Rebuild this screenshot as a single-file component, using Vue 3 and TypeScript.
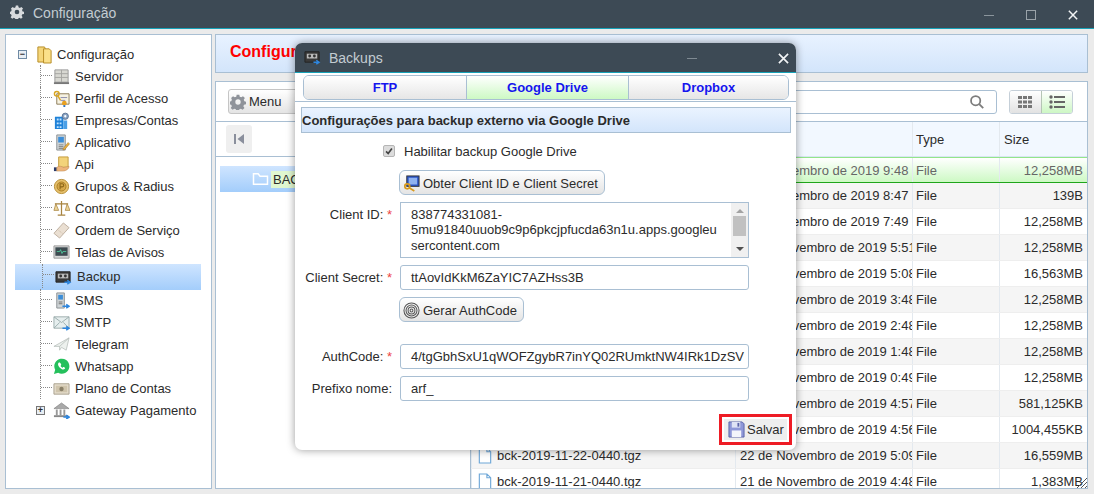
<template>
  <div class="app-window">
    <!-- Title bar -->
    <header class="title-bar">
      <svg class="title-gear" viewBox="0 0 24 24" v-html="gearIcon"></svg>
      <span class="title-text">Configuração</span>
      <div class="window-controls">
        <span class="ctl-min"></span>
        <span class="ctl-max"></span>
        <svg class="ctl-close" viewBox="0 0 12 12"><path d="M1 1 11 11M11 1 1 11" /></svg>
      </div>
    </header>

    <div class="workspace">
      <!-- Tree -->
      <aside class="tree-panel">
        <div class="tree-root">
          <span class="expander">−</span>
          <svg class="tree-icon folder-icon" viewBox="0 0 18 20">
            <path d="M2 2h7l1 2v14H2z" fill="#f5d67a" stroke="#b58a23" />
            <path d="M8 4h6l2 2v13H8z" fill="#fbe08a" stroke="#b58a23" />
          </svg>
          <span>Configuração</span>
        </div>
        <div class="tree-children">
          <div
            v-for="item in treeItems"
            :key="item.label"
            class="tree-row"
            :class="{ selected: item.selected }"
          >
            <span class="dots"></span>
            <svg class="tree-icon" viewBox="0 0 18 18" v-html="icons[item.icon]"></svg>
            <span>{{ item.label }}</span>
          </div>
        </div>
        <div class="tree-last">
          <span class="expander plus">+</span>
          <svg class="tree-icon" viewBox="0 0 18 18" v-html="icons.bank"></svg>
          <span>Gateway Pagamento</span>
        </div>
      </aside>

      <div class="main-col">
        <div class="page-header">Configurações de Backup</div>

        <section class="files-panel">
          <div class="toolbar">
            <button class="menu-btn">
              <svg class="menu-gear" viewBox="0 0 24 24" v-html="gearIcon"></svg>
              Menu
            </button>
            <div class="search-box">
              <svg class="search-icon" viewBox="0 0 18 18"><circle cx="7.5" cy="7.5" r="5.2" /><path d="M11.5 11.5 16 16" /></svg>
            </div>
            <div class="view-toggle">
              <span class="view-btn">
                <svg viewBox="0 0 16 14"><path d="M1 1h4v3H1zM6 1h4v3H6zM11 1h4v3h-4zM1 5.5h4v3H1zM6 5.5h4v3H6zM11 5.5h4v3h-4zM1 10h4v3H1zM6 10h4v3H6zM11 10h4v3h-4z" fill="#777" /></svg>
              </span>
              <span class="view-btn active">
                <svg viewBox="0 0 16 14"><circle cx="2" cy="2" r="1.7" fill="#666" /><circle cx="2" cy="7" r="1.7" fill="#666" /><circle cx="2" cy="12" r="1.7" fill="#666" /><path d="M5 2h11M5 7h11M5 12h11" stroke="#666" stroke-width="1.8" /></svg>
              </span>
            </div>
          </div>

          <div class="split">
            <div class="folders">
              <div class="folders-head">
                <span class="collapse-btn">
                  <svg viewBox="0 0 12 12"><path d="M1 1h2v10H1z" fill="#8a8f9c" /><path d="M11 1v10L4.500 6z" fill="#8a8f9c" /></svg>
                </span>
              </div>
              <div class="folder-row">
                <svg class="folder-white" viewBox="0 0 18 15"><path d="M1.500 13V2h5l2 2.500h8V13z" /></svg>
                <span class="folder-name">BACKUP</span>
              </div>
            </div>

            <div class="file-table">
              <div class="table-row table-head">
                <span class="cell">Name</span>
                <span class="cell">Date</span>
                <span class="cell type-cell">Type</span>
                <span class="cell">Size</span>
              </div>
              <div
                v-for="(file, index) in files"
                :key="file.name"
                class="table-row"
                :class="{ current: index === 0, odd: index % 2 === 1 }"
              >
                <span class="cell name-cell">
                  <svg class="file-icon" viewBox="0 0 14 18"><path d="M1 1h8l4 4v12H1zM9 1v4h4" /></svg>
                  {{ file.name }}
                </span>
                <span class="cell date-cell">{{ file.date }}</span>
                <span class="cell type-cell">File</span>
                <span class="cell size-cell">{{ file.size }}</span>
              </div>
            </div>
          </div>
          <svg class="grip" viewBox="0 0 12 12"><path d="M1 11 11 1M5 11 11 5M9 11 11 9" /></svg>
        </section>
      </div>
    </div>

    <!-- Backups dialog -->
    <div class="dialog">
      <div class="dialog-title">
        <svg class="dialog-icon" viewBox="0 0 18 18" v-html="icons.tape"></svg>
        <span class="dialog-name">Backups</span>
        <span class="dialog-min"></span>
        <svg class="dialog-close" viewBox="0 0 12 12"><path d="M1 1 11 11M11 1 1 11" /></svg>
      </div>

      <div class="tabs-wrap">
        <div class="tabs">
          <span
            v-for="tab in tabs"
            :key="tab"
            class="tab"
            :class="{ active: tab === 'Google Drive' }"
          >{{ tab }}</span>
        </div>
      </div>

      <div class="section-title">Configurações para backup externo via Google Drive</div>

      <div class="form">
        <div class="check-row">
          <span class="checkbox">
            <svg viewBox="0 0 12 12"><path d="M2.500 6.500 5 9l4.500-6" /></svg>
          </span>
          <span>Habilitar backup Google Drive</span>
        </div>

        <div class="field-row">
          <span></span>
          <button class="form-btn">
            <svg class="btn-icon" viewBox="0 0 18 18">
              <rect x="4" y="1" width="13" height="11" fill="#2a55c8" stroke="#333" />
              <path d="M6 3h9v7H6z" fill="#8fb2f0" />
              <circle cx="4.500" cy="12" r="2.600" fill="none" stroke="#d89a1e" stroke-width="1.800" />
              <path d="M6.500 13.500 12 17" stroke="#d89a1e" stroke-width="1.800" />
            </svg>
            Obter Client ID e Client Secret
          </button>
        </div>

        <div class="field-row tall">
          <label>Client ID: <em>*</em></label>
          <div class="textarea">
            <div class="textarea-text">838774331081-<br />5mu91840uuob9c9p6pkcjpfucda63n1u.apps.googleu<br />sercontent.com</div>
            <div class="scrollbar">
              <span class="arrow up"></span>
              <span class="thumb"></span>
              <span class="arrow down"></span>
            </div>
          </div>
        </div>

        <div class="field-row">
          <label>Client Secret: <em>*</em></label>
          <div class="input">ttAovIdKkM6ZaYIC7AZHss3B</div>
        </div>

        <div class="field-row">
          <span></span>
          <button class="form-btn">
            <svg class="btn-icon" viewBox="0 0 18 18">
              <g fill="none" stroke="#555" stroke-width="1.100">
                <circle cx="9" cy="9" r="8" /><circle cx="9" cy="9" r="5.800" /><circle cx="9" cy="9" r="3.600" /><circle cx="9" cy="9" r="1.500" />
              </g>
            </svg>
            Gerar AuthCode
          </button>
        </div>

        <div class="field-row spaced">
          <label>AuthCode: <em>*</em></label>
          <div class="input">4/tgGbhSxU1qWOFZgybR7inYQ02RUmktNW4IRk1DzSV</div>
        </div>

        <div class="field-row">
          <label>Prefixo nome:</label>
          <div class="input">arf_</div>
        </div>
      </div>

      <div class="dialog-foot">
        <div class="highlight">
          <button class="save-btn">
            <svg class="btn-icon" viewBox="0 0 18 18">
              <path d="M1 1h14l2 2v14H1z" fill="#8e97d8" stroke="#5a63a8" />
              <path d="M4 1h9v6H4z" fill="#dfe3f5" />
              <path d="M10 2h2v4h-2z" fill="#5a63a8" />
              <path d="M4 10h10v7H4z" fill="#f4f5fb" />
            </svg>
            Salvar
          </button>
        </div>
      </div>
    </div>
  </div>
</template>

<script setup lang="ts">
interface TreeItem {
  label: string;
  icon: string;
  selected?: boolean;
}

interface FileRow {
  name: string;
  date: string;
  size: string;
}

const gearIcon =
  '<path fill="currentColor" fill-rule="evenodd" d="M10 1h4l.6 3 2.300 1 2.600-1.700 2.800 2.800L20.600 8.700l1 2.300 2.400.6v3.800l-3 .6-1 2.300 1.700 2.600-2.800 2.800-2.600-1.700-2.300 1-.6 3h-4l-.6-3-2.300-1-2.600 1.700-2.800-2.800 1.700-2.600-1-2.300-3-.6v-3.800l3-.6 1-2.300L1.700 6.100l2.800-2.800L7.100 5l2.300-1zM12 8a4 4 0 1 0 0 8 4 4 0 0 0 0-8z"/>';

const icons: Record<string, string> = {
  server:
    '<path d="M2 2h14v13H2z" fill="#d8d8d2" stroke="#999"/><path d="M9 2v13M2 6h14M2 10h14" stroke="#a5a5a0"/><path d="M1 15h16v2H1z" fill="#777"/>',
  cert:
    '<path d="M4 4h13v11H4z" fill="#f6f2e2" stroke="#8a7a55"/><path d="M8 8h7M8 11h5" stroke="#88a"/><circle cx="4" cy="4" r="2.500" fill="none" stroke="#d8a520" stroke-width="1.500"/><path d="M5 6l3 5" stroke="#d8a520" stroke-width="1.500"/><circle cx="12" cy="14" r="2.500" fill="#e8a020"/><path d="M11 16h2v2h-2z" fill="#2a70c8"/>',
  company:
    '<path d="M2 5h9v13H2z" fill="#1f82d8"/><path d="M4 7h2v2H4zM7 7h2v2H7zM4 11h2v2H4zM7 11h2v2H7zM4 15h2v2H4zM7 15h2v2H7z" fill="#bfe2ff"/><path d="M11 9h4v9h-4z" fill="#4ca0e6"/><circle cx="13" cy="4.500" r="3.300" fill="#8aa4c4" stroke="#5a7292"/><circle cx="13" cy="4.500" r="1.200" fill="#fff"/>',
  app:
    '<path d="M4 1h9v16H4z" fill="#cfd4d6" stroke="#8a9094"/><path d="M5.500 3h6v6h-6z" fill="#3d8ed8"/><path d="M6 11h5v1H6zM6 13h5v1H6zM6 15h5v1H6z" fill="#777"/><path d="M11 15l5-6 1.500 1.500-5 6-2 .5z" fill="#e8b040" stroke="#a06a20" stroke-width=".5"/>',
  api:
    '<path d="M6 1h10v11H6z" fill="#f3d37a" stroke="#c49a3a"/><path d="M1 12h3v4H1z" fill="#2a3a68"/><path d="M4 12c3-2 5-1 7 0l6-1c0 3-4 5-7 5H4z" fill="#eeb57c" stroke="#b98550" stroke-width=".5"/>',
  coin:
    '<circle cx="9" cy="9" r="7.500" fill="#e8c26e" stroke="#b58a30"/><circle cx="9" cy="9" r="4.800" fill="#d6a84a" stroke="#a87c24"/><path d="M7.500 12V6h2.200a1.700 1.700 0 0 1 0 3.400H7.500" fill="none" stroke="#8a6418" stroke-width="1.100"/>',
  scale:
    '<path d="M9 1v15M5 16h8M2 4h14" stroke="#a88440" stroke-width="1.300" fill="none"/><path d="M3 4 1 11h5zM15 4l-2 7h5z" fill="#eed69a" stroke="#a88440" stroke-width=".8"/>',
  ticket:
    '<path d="M1 12 11 1l6 5L7 17z" fill="#eadfd2" stroke="#bdae9e"/><path d="M6 9l4 3" stroke="#c9b8a4" stroke-dasharray="1 1"/>',
  monitor:
    '<path d="M1 2h16v13H1z" fill="#d5d6d6" stroke="#999"/><path d="M2.500 3.500h13v9h-13z" fill="#3d4a50"/><path d="M4 8h3l1-2 1.500 4 1-2H14" fill="none" stroke="#52d0a0" stroke-width=".9"/>',
  tape:
    '<path d="M1 4h15v11H1z" fill="#3a3a3a" stroke="#222"/><path d="M3 6h11v5H3z" fill="#bbb"/><circle cx="6" cy="8.500" r="1.500" fill="#333"/><circle cx="11" cy="8.500" r="1.500" fill="#333"/><path d="M10 15h5M13 13l3 2-3 2" fill="none" stroke="#2e86de" stroke-width="1.500"/>',
  sms:
    '<path d="M4 1h8v16H4z" fill="#cfd4d6" stroke="#8a9094"/><path d="M5.500 3h5v5h-5z" fill="#3d8ed8"/><path d="M6 10h4v1H6zM6 12h4v1H6z" fill="#777"/><path d="M10 15h6M14 13l3 2-3 2" fill="none" stroke="#2e86de" stroke-width="1.600"/>',
  mail:
    '<path d="M1 3h16v12H1z" fill="#e6eeee" stroke="#9aacac"/><path d="M1 3l8 6 8-6M1 15l6-6M17 15l-6-6" fill="none" stroke="#9aacac"/><path d="M10 15h6M14 13l3 2-3 2" fill="none" stroke="#2e86de" stroke-width="1.600"/>',
  plane:
    '<path d="M1 11 17 2l-3 13-5-3-2 3v-4z" fill="#edf1ee" stroke="#b5bdb8" stroke-width=".8"/><path d="M7 11 17 2" stroke="#b5bdb8" stroke-width=".8"/>',
  whatsapp:
    '<path d="M1 17l1.300-4.500A8 8 0 1 1 5.500 15.700z" fill="#25c05c"/><path d="M6 5c-1 1-1 3 1 5s4 2.800 5.500 1.500c.6-.6.300-1-.3-1.400-1-.6-1.300-.6-1.700 0-.3.400-.7.300-1.600-.5S7.800 8.400 8.300 8c.6-.5.500-.8 0-1.800C7.800 5 7 4.300 6 5z" fill="#fff"/>',
  money:
    '<path d="M1 4h16v11H1z" fill="#e4dccb" stroke="#a89f8c"/><path d="M3 6h12v7H3z" fill="#cfc4ac"/><circle cx="9" cy="9.500" r="2.300" fill="#8a8068"/>',
  bank:
    '<path d="M1 7 9 1l8 6z" fill="#a9a9a9" stroke="#777" stroke-width=".6"/><path d="M3 8h2v6H3zM7 8h2v6H7zM11 8h2v6h-2z" fill="#999"/><path d="M1 14h15v2H1z" fill="#888"/><path d="M11 16h5M14 14l3 2-3 2" fill="none" stroke="#2e86de" stroke-width="1.600"/>'
};

const treeItems: TreeItem[] = [
  { label: 'Servidor', icon: 'server' },
  { label: 'Perfil de Acesso', icon: 'cert' },
  { label: 'Empresas/Contas', icon: 'company' },
  { label: 'Aplicativo', icon: 'app' },
  { label: 'Api', icon: 'api' },
  { label: 'Grupos & Radius', icon: 'coin' },
  { label: 'Contratos', icon: 'scale' },
  { label: 'Ordem de Serviço', icon: 'ticket' },
  { label: 'Telas de Avisos', icon: 'monitor' },
  { label: 'Backup', icon: 'tape', selected: true },
  { label: 'SMS', icon: 'sms' },
  { label: 'SMTP', icon: 'mail' },
  { label: 'Telegram', icon: 'plane' },
  { label: 'Whatsapp', icon: 'whatsapp' },
  { label: 'Plano de Contas', icon: 'money' }
];

const tabs = ['FTP', 'Google Drive', 'Dropbox'];

const files: FileRow[] = [
  { name: 'bck-2019-12-03-0440.tgz', date: '3 de Novembro de 2019 9:48', size: '12,258MB' },
  { name: 'bck-2019-12-02-0440.tgz', date: '2 de Novembro de 2019 8:47', size: '139B' },
  { name: 'bck-2019-12-01-0440.tgz', date: '1 de Novembro de 2019 7:49', size: '12,258MB' },
  { name: 'bck-2019-11-30-0440.tgz', date: '30 de Novembro de 2019 5:51', size: '12,258MB' },
  { name: 'bck-2019-11-29-0440.tgz', date: '29 de Novembro de 2019 5:08', size: '16,563MB' },
  { name: 'bck-2019-11-28-0440.tgz', date: '28 de Novembro de 2019 3:48', size: '12,258MB' },
  { name: 'bck-2019-11-27-0440.tgz', date: '27 de Novembro de 2019 2:48', size: '12,258MB' },
  { name: 'bck-2019-11-26-0440.tgz', date: '26 de Novembro de 2019 1:48', size: '12,258MB' },
  { name: 'bck-2019-11-25-0440.tgz', date: '25 de Novembro de 2019 0:49', size: '12,258MB' },
  { name: 'bck-2019-11-24-0440.tgz', date: '24 de Novembro de 2019 4:57', size: '581,125KB' },
  { name: 'bck-2019-11-23-0440.tgz', date: '23 de Novembro de 2019 4:56', size: '1004,455KB' },
  { name: 'bck-2019-11-22-0440.tgz', date: '22 de Novembro de 2019 5:09', size: '16,559MB' },
  { name: 'bck-2019-11-21-0440.tgz', date: '21 de Novembro de 2019 4:48', size: '1,383MB' }
];
</script>

<style>
html,
body {
  margin: 0;
  overflow: hidden;
  background: #ebebeb;
}
</style>

<style scoped>
* {
  box-sizing: border-box;
}

.app-window {
  position: relative;
  width: 1094px;
  height: 494px;
  display: flex;
  flex-direction: column;
  overflow: hidden;
  background: #ebebeb;
  font-family: "Liberation Sans", Arial, sans-serif;
  font-size: 13px;
  color: #2b2b2b;
}

/* Title bar */
.title-bar {
  height: 29px;
  flex-shrink: 0;
  display: flex;
  align-items: center;
  padding: 0 16px 2px 10px;
  background: #3d4a55;
  border-bottom: 1px solid #17a2b8;
  color: #c3ccd2;
}

.title-gear {
  width: 14px;
  height: 14px;
  margin-top: -3px;
  color: #d7dadd;
}

.title-text {
  margin-left: 9px;
  font-size: 14px;
}

.window-controls {
  margin-left: auto;
  margin-top: 4px;
  display: flex;
  align-items: center;
  gap: 32px;
}

.ctl-min {
  width: 10px;
  height: 1px;
  background: #8b959c;
}

.ctl-max {
  width: 10px;
  height: 10px;
  border: 1px solid #9aa3a9;
}

.ctl-close {
  width: 10px;
  height: 10px;
  fill: none;
  stroke: #f2f4f5;
  stroke-width: 1.800;
}

.workspace {
  flex: 1;
  min-height: 0;
  display: flex;
  gap: 3px;
  padding: 5px 6px 5px 5px;
}

/* Tree */
.tree-panel {
  width: 207px;
  flex-shrink: 0;
  padding: 8px 10px 0 9px;
  background: #fff;
  border: 1px solid #a9bfd3;
}

.tree-root,
.tree-last {
  height: 22px;
  display: flex;
  align-items: center;
}

.tree-root span:last-child,
.tree-last span:last-child,
.tree-row span:last-child {
  white-space: nowrap;
}

.expander {
  width: 9px;
  height: 9px;
  margin-left: 3px;
  display: flex;
  align-items: center;
  justify-content: center;
  border: 1px solid #6f8aa5;
  background: #e8eef4;
  font-size: 9px;
  line-height: 1;
  font-weight: 700;
}

.expander.plus {
  margin-left: 21px;
  margin-right: 8px;
  border-color: #777;
}

.tree-icon {
  width: 17px;
  height: 17px;
  margin-right: 5px;
  flex-shrink: 0;
}

.folder-icon {
  width: 17px;
  height: 19px;
  margin-left: 9px;
  margin-right: 4px;
}

.tree-children {
  display: flex;
  flex-direction: column;
}

.tree-row {
  height: 22px;
  display: flex;
  align-items: center;
  padding-left: 25px;
}

.tree-row .dots {
  width: 12px;
  height: 22px;
  margin-right: 1px;
  border-left: 1px dotted #888;
  background: linear-gradient(to right, #888 50%, transparent 50%) 0 10px / 2px 1px repeat-x;
  flex-shrink: 0;
}

.tree-row.selected {
  height: 26px;
  margin: 1px 0 -1px;
  padding-left: 27px;
  padding-bottom: 2px;
  background: linear-gradient(#cfe5ff, #a3cdfb);
}

.tree-row.selected .dots {
  height: 24px;
  background-position: 0 10px;
}

/* Main column */
.main-col {
  flex: 1;
  min-width: 0;
  display: flex;
  flex-direction: column;
  gap: 8px;
}

.page-header {
  height: 39px;
  flex-shrink: 0;
  padding: 0 0 3px 14px;
  display: flex;
  align-items: center;
  background: linear-gradient(#e8f2ff, #d3e5fb);
  border: 1px solid #a9bfd3;
  color: #f00;
  font-size: 16px;
  font-weight: 700;
}

.files-panel {
  position: relative;
  flex: 1;
  min-height: 0;
  display: flex;
  flex-direction: column;
  background: #fff;
  border: 1px solid #a9bfd3;
}

.toolbar {
  height: 40px;
  flex-shrink: 0;
  display: flex;
  align-items: center;
  padding-left: 12px;
  border-bottom: 1px solid #a9bfd3;
}

.menu-btn {
  width: 120px;
  height: 25px;
  display: flex;
  align-items: center;
  gap: 3px;
  padding: 0 0 0 1px;
  background: linear-gradient(#fff, #e4e4e4);
  border: 1px solid #c5c5c5;
  border-radius: 3px;
  font: 13px "Liberation Sans", Arial, sans-serif;
  color: #2b2b2b;
}

.menu-gear {
  width: 16px;
  height: 16px;
  color: #8f939a;
}

.search-box {
  flex: 1;
  height: 24px;
  margin-left: 40px;
  display: flex;
  align-items: center;
  justify-content: flex-end;
  padding-right: 11px;
  border: 1px solid #a9bfd3;
  border-radius: 3px;
}

.search-icon {
  width: 16px;
  height: 16px;
  fill: none;
  stroke: #7d7d7d;
  stroke-width: 2;
}

.view-toggle {
  width: 64px;
  height: 24px;
  margin: 0 14px 0 12px;
  display: flex;
  flex-shrink: 0;
  border: 1px solid #c5cfd8;
  border-radius: 3px;
  overflow: hidden;
}

.view-btn {
  flex: 1;
  display: flex;
  align-items: center;
  justify-content: center;
  background: linear-gradient(#fff, #e2e2e2);
}

.view-btn.active {
  border-left: 1px solid #b5c5b5;
  background: linear-gradient(#fff, #cdf7c4);
}

.view-btn svg {
  width: 16px;
  height: 14px;
}

.split {
  flex: 1;
  min-height: 0;
  display: flex;
}

.folders {
  width: 255px;
  flex-shrink: 0;
  border-right: 1px solid #a9bfd3;
}

.folders-head {
  height: 35px;
  padding: 3px 10px;
  border-bottom: 1px solid #a9bfd3;
}

.collapse-btn {
  width: 26px;
  height: 28px;
  display: flex;
  align-items: center;
  justify-content: center;
  background: #efefef;
  border-radius: 3px;
}

.collapse-btn svg {
  width: 12px;
  height: 12px;
}

.folder-row {
  height: 26px;
  margin: 9px 0 0 4px;
  padding-left: 32px;
  display: flex;
  align-items: center;
  background: linear-gradient(#cfe5ff, #a3cdfb);
}

.folder-white {
  width: 17px;
  height: 14px;
  fill: none;
  stroke: #fff;
  stroke-width: 1.600;
}

.folder-name {
  margin-left: 2px;
  padding: 0 2px;
  height: 17px;
  line-height: 17px;
  background: #e0f7d0;
}

.file-table {
  flex: 1;
  min-width: 0;
  overflow: hidden;
}

.table-row {
  height: 26px;
  display: grid;
  grid-template-columns: 264px 177px 87px 1fr;
  background: #fff;
  border-bottom: 1px solid #eee;
}

.table-row.odd {
  background: #f5f5f5;
}

.table-row.table-head {
  height: 35px;
  background: #f2f8ff;
  border-bottom: 1px solid #d9e6f2;
}

.table-row.current {
  background: linear-gradient(#fff, #cdf9c4);
  border-top: 1px solid #93e58a;
  border-bottom: 1px solid #1fa51a;
  color: #666;
}

.cell {
  min-width: 0;
  padding: 0 4px;
  display: flex;
  align-items: center;
  white-space: nowrap;
  overflow: hidden;
  border-left: 1px solid #e3e9ef;
}

.name-cell {
  gap: 5px;
  padding-left: 6px;
}

.date-cell {
  padding-right: 0;
}

.type-cell {
  padding-left: 3px;
}

.size-cell {
  justify-content: flex-end;
}

.file-icon {
  width: 14px;
  height: 17px;
  flex-shrink: 0;
  fill: #fff;
  stroke: #6ea7d8;
  stroke-width: 1.200;
}

.grip {
  position: absolute;
  right: -1px;
  bottom: -1px;
  width: 12px;
  height: 12px;
  fill: none;
  stroke: #555;
}

/* Dialog */
.dialog {
  position: absolute;
  left: 295px;
  top: 43px;
  width: 501px;
  height: 407px;
  display: flex;
  flex-direction: column;
  background: #fff;
  border-radius: 7px;
  overflow: hidden;
  box-shadow: 0 0 9px rgba(0, 0, 0, 0.4);
}

.dialog-title {
  height: 30px;
  flex-shrink: 0;
  display: flex;
  align-items: center;
  padding: 0 7px 0 9px;
  background: #3d4a55;
  border-bottom: 1px solid #17a2b8;
  color: #c3ccd2;
}

.dialog-icon {
  width: 17px;
  height: 17px;
  margin-top: -3px;
}

.dialog-name {
  margin-left: 8px;
  font-size: 14px;
}

.dialog-min {
  width: 10px;
  height: 1px;
  margin-left: auto;
  margin-right: 81px;
  margin-top: 2px;
  background: #7f8a92;
}

.dialog-close {
  width: 11px;
  height: 11px;
  margin-top: 2px;
  fill: none;
  stroke: #f2f4f5;
  stroke-width: 1.800;
}

.tabs-wrap {
  padding: 2px 7px 1px 8px;
  border-bottom: 1px solid #a9bfd3;
}

.tabs {
  height: 25px;
  display: grid;
  grid-template-columns: 162px 162px 1fr;
  border: 1px solid #a9bfd3;
  border-radius: 6px;
  overflow: hidden;
}

.tab {
  display: flex;
  align-items: center;
  justify-content: center;
  background: linear-gradient(#fff, #e6e6e6);
  color: #1515ee;
  font-weight: 700;
}

.tab + .tab {
  border-left: 1px solid #a9bfd3;
}

.tab.active {
  background: linear-gradient(#fff, #cdf9c4);
}

.section-title {
  height: 26px;
  margin: 5px 5px 0 6px;
  display: flex;
  align-items: center;
  background: linear-gradient(#eaf3ff, #d3e5fb);
  border: 1px solid #a9bfd3;
  font-weight: 700;
}

.form {
  display: flex;
  flex-direction: column;
  padding: 0 47px 0 0;
}

.check-row {
  height: 24px;
  margin: 6px 0 0 88px;
  display: flex;
  align-items: center;
  gap: 9px;
}

.checkbox {
  width: 12px;
  height: 12px;
  display: flex;
  background: #dcdcdc;
  border: 1px solid #b5b5b5;
  border-radius: 2px;
}

.checkbox svg {
  width: 10px;
  height: 10px;
  fill: none;
  stroke: #444;
  stroke-width: 2;
}

.field-row {
  min-height: 25px;
  margin-top: 7px;
  display: grid;
  grid-template-columns: 105px 1fr;
  align-items: center;
}

.field-row.tall {
  align-items: start;
}

.field-row.spaced {
  margin-top: 22px;
}

.field-row label {
  padding-right: 8px;
  text-align: right;
  white-space: nowrap;
}

.field-row.tall label {
  padding-top: 5px;
}

.field-row em {
  color: #e44;
  font-style: normal;
}

.form-btn {
  justify-self: start;
  height: 25px;
  margin-left: -1px;
  padding: 1px 6px 0 3px;
  display: flex;
  align-items: center;
  gap: 3px;
  background: linear-gradient(#fff, #e4e4e4);
  border: 1px solid #a9bfd3;
  border-radius: 6px;
  font: 13px "Liberation Sans", Arial, sans-serif;
  color: #2b2b2b;
}

.btn-icon {
  width: 17px;
  height: 17px;
  flex-shrink: 0;
}

.input {
  height: 25px;
  padding: 0 4px 0 10px;
  line-height: 24px;
  border: 1px solid #a9bfd3;
  border-radius: 3px;
  white-space: nowrap;
  overflow: hidden;
}

.textarea {
  height: 56px;
  display: flex;
  border: 1px solid #a9bfd3;
  overflow: hidden;
}

.textarea-text {
  flex: 1;
  padding: 4px 0 0 10px;
  line-height: 15.300px;
  white-space: nowrap;
  overflow: hidden;
}

.scrollbar {
  width: 17px;
  flex-shrink: 0;
  display: flex;
  flex-direction: column;
  align-items: center;
  background: #f0f0f0;
}

.arrow {
  width: 0;
  height: 0;
  margin: 6px 0 3px;
  border-left: 4px solid transparent;
  border-right: 4px solid transparent;
}

.arrow.up {
  border-bottom: 4px solid #a3a3a3;
}

.arrow.down {
  margin: auto 0 6px;
  border-top: 4px solid #505050;
}

.thumb {
  width: 13px;
  height: 20px;
  background: #c1c1c1;
}

.dialog-foot {
  margin-top: auto;
  padding: 0 4px 5px 0;
  display: flex;
  justify-content: flex-end;
}

.highlight {
  width: 73px;
  height: 31px;
  padding: 2px;
  border: 3px solid #ee1c25;
}

.save-btn {
  width: 100%;
  height: 100%;
  padding: 0 0 0 4px;
  display: flex;
  align-items: center;
  gap: 2px;
  background: #eeeeee;
  border: none;
  font: 13px "Liberation Sans", Arial, sans-serif;
  color: #2b2b2b;
  white-space: nowrap;
}
</style>
